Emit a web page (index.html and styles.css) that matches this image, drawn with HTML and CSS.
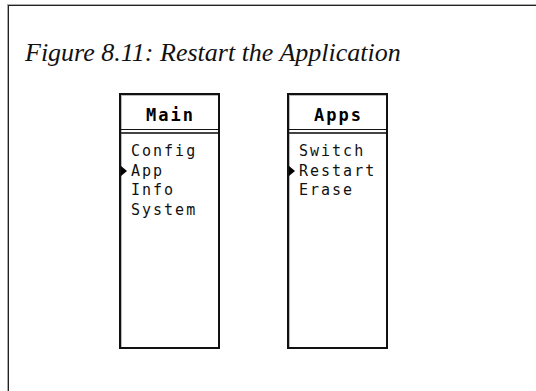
FILE: index.html
```html
<!DOCTYPE html>
<html>
<head>
<meta charset="utf-8">
<link rel="stylesheet" href="styles.css">
</head>
<body>
<div class="frame">
  <p class="caption">Figure 8.11: Restart the Application</p>
  <div class="screens">
    <div class="screen">
      <div class="screen-title">Main</div>
      <div class="rule"></div>
      <ul class="menu">
        <li><span class="mark"></span>Config</li>
        <li class="sel"><span class="mark"></span>App</li>
        <li><span class="mark"></span>Info</li>
        <li><span class="mark"></span>System</li>
      </ul>
    </div>
    <div class="screen">
      <div class="screen-title">Apps</div>
      <div class="rule"></div>
      <ul class="menu">
        <li><span class="mark"></span>Switch</li>
        <li class="sel"><span class="mark"></span>Restart</li>
        <li><span class="mark"></span>Erase</li>
      </ul>
    </div>
  </div>
</div>
</body>
</html>
```
FILE: styles.css
```css
html, body {
  margin: 0;
  background: #fff;
  overflow: hidden;
}
.frame {
  margin: 5px 0 0 8px;
  width: 700px;
  height: 600px;
  border-left: 1px solid #222;
  border-top: 1px solid #222;
  box-shadow: -1px -1px 0 #aaa;
}
.caption {
  margin: 0;
  padding: 32px 0 0 16px;
  font: italic 26px/30px "Liberation Serif", serif;
  color: #111;
}
.screens {
  display: flex;
  gap: 67px;
  padding-left: 110px;
  margin-top: 25px;
}
.screen {
  width: 101px;
  height: 256px;
  box-sizing: border-box;
  border: 2px solid #111;
  box-shadow: inset 1px 1px 0 #bbb;
}
.screen-title {
  height: 34px;
  box-sizing: border-box;
  padding: 6px 0 0 2px;
  display: flex;
  align-items: center;
  justify-content: center;
  font: bold 17px "DejaVu Sans Mono", monospace;
  letter-spacing: 2px;
  color: #000;
}
.rule {
  height: 2px;
  border-top: 1px solid #111;
  border-bottom: 2px solid #444;
}
.menu {
  list-style: none;
  margin: 0;
  padding: 8px 0 0 0;
  font: 15px/19.5px "DejaVu Sans Mono", monospace;
  letter-spacing: 2px;
  color: #111;
}
.menu li {
  display: flex;
  align-items: center;
  white-space: nowrap;
}
.mark {
  width: 10px;
  height: 11px;
  flex: none;
}
.sel .mark::before {
  content: "";
  display: block;
  width: 0;
  height: 0;
  border-top: 5px solid transparent;
  border-bottom: 5px solid transparent;
  border-left: 6px solid #000;
}
```
